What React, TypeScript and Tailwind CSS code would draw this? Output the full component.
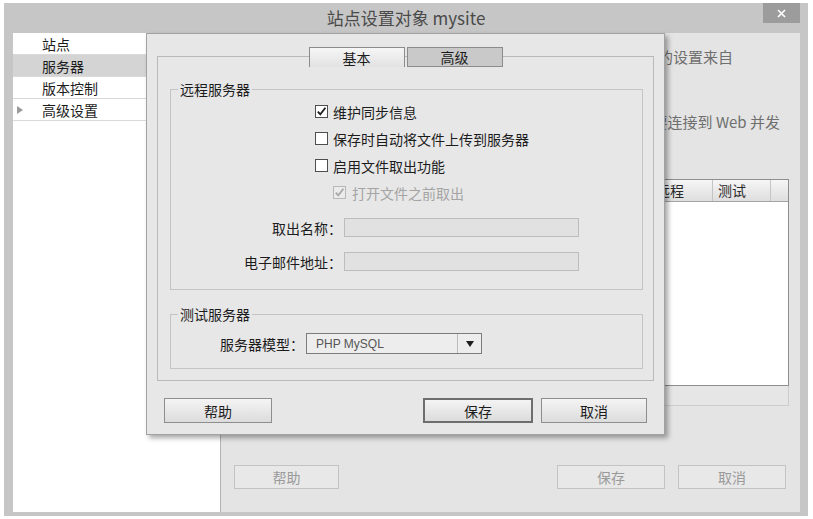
import React from 'react';

const sideItems = ['站点', '服务器', '版本控制', '高级设置'];

function CheckBox({ checked, disabled }: { checked?: boolean; disabled?: boolean }) {
    return (
        <span
            className={`w-[13px] h-[13px] shrink-0 border flex items-center justify-center ${disabled ? 'border-[#b8b8b8] bg-[#ebebeb]' : 'border-[#4e4e4e] bg-white'}`}
        >
            {checked && (
                <svg width="11" height="11" viewBox="0 0 11 11">
                    <path
                        d="M1.8 5.6 L4.3 8.4 L9.4 1.8"
                        fill="none"
                        stroke={disabled ? '#a8a8a8' : '#1e1e1e'}
                        strokeWidth="1.8"
                    />
                </svg>
            )}
        </span>
    );
}

function Sidebar() {
    return (
        <div className="w-[208px] shrink-0 bg-white border-r border-[#b4b4b4] flex flex-col">
            {sideItems.map((item, i) => (
                <div
                    key={item}
                    className={`h-[22px] flex items-center border-b border-[#d9d9d9] text-[14px] leading-[18px] ${i === 1 ? 'bg-[#d4d4d4]' : 'bg-white'}`}
                >
                    <span className="w-[29px] pl-[4px] flex items-center">
                        {i === 3 && (
                            <svg width="6" height="8" viewBox="0 0 6 8">
                                <path d="M0 0 L6 4 L0 8 Z" fill="#9a9a9a" />
                            </svg>
                        )}
                    </span>
                    <span className="text-[#1c1c1c]">{item}</span>
                </div>
            ))}
        </div>
    );
}

function Main() {
    return (
        <div className="flex-1 min-w-0 bg-[#e4e4e4] flex flex-col pt-[14px]">
            {/* intro text, left part sits under the dialog */}
            <div className="h-[20px] pr-[67px] flex justify-end whitespace-nowrap text-[15px] leading-[20px] text-[#6f6f6f]">
                <span>的设置来自</span>
            </div>
            <div className="h-[20px] mt-[45px] pr-[20px] flex justify-end whitespace-nowrap text-[15px] leading-[20px] text-[#6f6f6f]">
                <span>要连接到 Web 并发</span>
            </div>

            {/* server table */}
            <div className="mx-[11px] mt-[47px] flex flex-col">
                <div className="h-[207px] border border-[#8e8e8e] bg-white flex flex-col">
                    <div className="h-[22px] flex bg-gradient-to-b from-[#f6f6f6] to-[#dedede] border-b border-[#a4a4a4] text-[14px] leading-[21px] text-[#2a2a2a]">
                        <div className="flex-1 border-r border-[#c4c4c4]" />
                        <div className="w-[140px] border-r border-[#c4c4c4]" />
                        <div className="w-[92px] border-r border-[#c4c4c4]" />
                        <div className="w-[61px] pl-[4px] border-r border-[#c4c4c4]">远程</div>
                        <div className="w-[58px] pl-[5px] border-r border-[#c4c4c4]">测试</div>
                        <div className="w-[17px]" />
                    </div>
                    <div className="flex-1 bg-white" />
                </div>
                <div className="h-[20px] border-x border-b border-[#cdcdcd] bg-[#e6e6e6]" />
            </div>

            {/* bottom buttons (disabled while dialog open) */}
            <div className="mt-[59px] flex justify-between pl-[13px] pr-[14px]">
                <div className="w-[105px] h-[24px] border border-[#c3c3c3] bg-[#e8e8e8] flex items-center justify-center text-[14px] text-[#9a9a9a]">
                    帮助
                </div>
                <div className="flex gap-[13px]">
                    <div className="w-[108px] h-[24px] border border-[#c3c3c3] bg-[#e8e8e8] flex items-center justify-center text-[14px] text-[#9a9a9a]">
                        保存
                    </div>
                    <div className="w-[108px] h-[24px] border border-[#c3c3c3] bg-[#e8e8e8] flex items-center justify-center text-[14px] text-[#9a9a9a]">
                        取消
                    </div>
                </div>
            </div>
        </div>
    );
}

function Dialog() {
    return (
        <div className="absolute left-[142px] top-[30px] w-[519px] h-[402px] bg-[#e7e7e7] border border-[#a2a2a2] shadow-[3px_3px_5px_rgba(0,0,0,0.35)] flex flex-col text-[14px] leading-[18px] text-[#1c1c1c]">
            {/* Tabs */}
            <div className="relative z-10 mt-[13px] ml-[10px] w-[497px] flex justify-center gap-[2px]">
                <div className="w-[96px] h-[20px] border-x border-t border-[#8c8c8c] bg-gradient-to-b from-[#f6f6f6] to-[#e2e2e2] flex items-center justify-center">
                    基本
                </div>
                <div className="w-[96px] h-[20px] border border-[#8c8c8c] bg-[#c9c9c9] flex items-center justify-center">
                    高级
                </div>
            </div>

            {/* Tab panel */}
            <div className="ml-[10px] w-[497px] -mt-[11px] border border-[#b9b9b9] pt-[23px] pl-[12px] pr-[10px] pb-[11px]">
                <fieldset className="border border-[#c4c4c4] px-[7px] pt-0 pb-[18px]">
                    <legend className="px-[2px] leading-[18px]">远程服务器</legend>
                    <div className="flex flex-col">
                        <div className="h-[27px] flex items-center pl-[137px] gap-[5px]">
                            <CheckBox checked />
                            <span>维护同步信息</span>
                        </div>
                        <div className="h-[27px] flex items-center pl-[137px] gap-[5px]">
                            <CheckBox />
                            <span>保存时自动将文件上传到服务器</span>
                        </div>
                        <div className="h-[27px] flex items-center pl-[137px] gap-[5px]">
                            <CheckBox />
                            <span>启用文件取出功能</span>
                        </div>
                        <div className="h-[27px] flex items-center pl-[155px] gap-[6px]">
                            <CheckBox checked disabled />
                            <span className="text-[#a4a4a4]">打开文件之前取出</span>
                        </div>
                    </div>
                    <div className="mt-[12px] flex flex-col gap-[15px]">
                        <div className="flex items-center">
                            <span className="w-[164px] text-right">取出名称：</span>
                            <div className="ml-[2px] w-[235px] h-[19px] border border-[#bdbdbd] bg-[#e1e1e1]" />
                        </div>
                        <div className="flex items-center">
                            <span className="w-[164px] text-right">电子邮件地址：</span>
                            <div className="ml-[2px] w-[235px] h-[19px] border border-[#bdbdbd] bg-[#e1e1e1]" />
                        </div>
                    </div>
                </fieldset>

                <fieldset className="mt-[15px] border border-[#c4c4c4] px-[7px] pt-[10px] pb-[14px]">
                    <legend className="px-[2px] leading-[18px]">测试服务器</legend>
                    <div className="flex items-center">
                        <span className="w-[126px] text-right">服务器模型：</span>
                        <div className="ml-[2px] w-[176px] h-[21px] border border-[#7c7c7c] bg-[#ededed] flex items-center">
                            <span className="flex-1 pl-[9px] text-[12px] text-[#555] font-['Liberation_Sans',sans-serif]">
                                PHP MySQL
                            </span>
                            <span className="w-[24px] h-full border-l border-[#bcbcbc] flex items-center justify-center">
                                <svg width="8" height="6" viewBox="0 0 8 6">
                                    <path d="M0 0 L8 0 L4 6 Z" fill="#1e1e1e" />
                                </svg>
                            </span>
                        </div>
                    </div>
                </fieldset>
            </div>

            {/* Dialog buttons */}
            <div className="mt-[17px] flex justify-between px-[17px]">
                <div className="w-[108px] h-[25px] border border-[#8e8e8e] bg-gradient-to-b from-[#f4f4f4] to-[#dcdcdc] flex items-center justify-center">
                    帮助
                </div>
                <div className="flex gap-[8px]">
                    <div className="w-[110px] h-[25px] border-2 border-[#6e6e6e] bg-gradient-to-b from-[#f4f4f4] to-[#dcdcdc] flex items-center justify-center">
                        保存
                    </div>
                    <div className="w-[106px] h-[25px] border border-[#8e8e8e] bg-gradient-to-b from-[#f4f4f4] to-[#dcdcdc] flex items-center justify-center">
                        取消
                    </div>
                </div>
            </div>
        </div>
    );
}

export default function App() {
    return (
        <div className="w-[813px] h-[519px] bg-white pt-[3px] pl-[4px] font-['Noto_Sans_CJK_SC',sans-serif]">
            <div className="relative w-[804px] h-[513px] bg-[#c6c6c6] flex flex-col">
                {/* Title bar */}
                <div className="relative h-[30px] shrink-0 flex items-center justify-center">
                    <span className="text-[17px] leading-[20px] text-[#4a4a4a]">站点设置对象 mysite</span>
                    <div className="absolute right-[8px] top-0 w-[37px] h-[20px] bg-[#9c9c9c] flex items-center justify-center">
                        <svg width="9" height="9" viewBox="0 0 9 9">
                            <path d="M1 1 L8 8 M8 1 L1 8" stroke="#ffffff" strokeWidth="1.7" />
                        </svg>
                    </div>
                </div>

                <div className="flex-1 min-h-0 flex pl-[9px] pr-[8px] pb-[4px]">
                    <Sidebar />
                    <Main />
                </div>

                <Dialog />
            </div>
        </div>
    );
}
